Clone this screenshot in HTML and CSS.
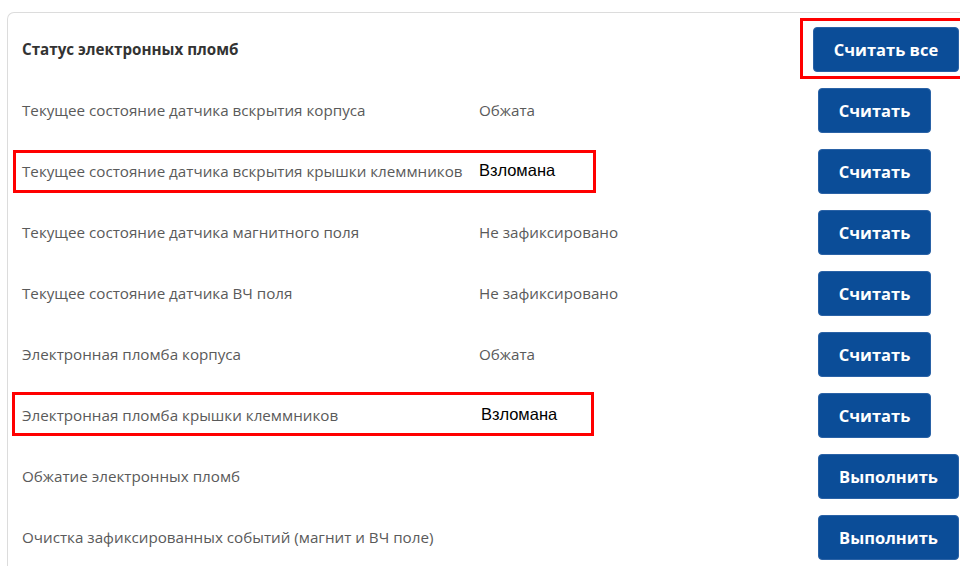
FILE: index.html
```html
<!DOCTYPE html>
<html lang="ru">
<head>
<meta charset="utf-8">
<title>Статус электронных пломб</title>
<link rel="stylesheet" href="styles.css">
</head>
<body>
<section class="card">
  <div class="row head">
    <div class="label title">Статус электронных пломб</div>
    <div class="value"></div>
    <div class="action"><button class="btn wide">Считать все</button></div>
  </div>
  <div class="row">
    <div class="label">Текущее состояние датчика вскрытия корпуса</div>
    <div class="value">Обжата</div>
    <div class="action"><button class="btn">Считать</button></div>
  </div>
  <div class="row">
    <div class="label">Текущее состояние датчика вскрытия крышки клеммников</div>
    <div class="value"><span class="alert">Взломана</span></div>
    <div class="action"><button class="btn">Считать</button></div>
  </div>
  <div class="row">
    <div class="label">Текущее состояние датчика магнитного поля</div>
    <div class="value">Не зафиксировано</div>
    <div class="action"><button class="btn">Считать</button></div>
  </div>
  <div class="row">
    <div class="label">Текущее состояние датчика ВЧ поля</div>
    <div class="value">Не зафиксировано</div>
    <div class="action"><button class="btn">Считать</button></div>
  </div>
  <div class="row">
    <div class="label">Электронная пломба корпуса</div>
    <div class="value">Обжата</div>
    <div class="action"><button class="btn">Считать</button></div>
  </div>
  <div class="row">
    <div class="label">Электронная пломба крышки клеммников</div>
    <div class="value"><span class="alert shift">Взломана</span></div>
    <div class="action"><button class="btn">Считать</button></div>
  </div>
  <div class="row">
    <div class="label">Обжатие электронных пломб</div>
    <div class="value"></div>
    <div class="action"><button class="btn long">Выполнить</button></div>
  </div>
  <div class="row">
    <div class="label">Очистка зафиксированных событий (магнит и ВЧ поле)</div>
    <div class="value"></div>
    <div class="action"><button class="btn long">Выполнить</button></div>
  </div>

  <!-- highlight frames drawn over the card -->
  <div class="mark mark-all"></div>
  <div class="mark mark-cover"></div>
  <div class="mark mark-seal"></div>
</section>
</body>
</html>
```

FILE: styles.css
```css
html, body {
  margin: 0;
  padding: 0;
  background: #fff;
  overflow: hidden;
}

body {
  width: 960px;
  height: 566px;
  font-family: "Open Sans", "Noto Sans", sans-serif;
}

.card {
  position: relative;
  margin: 12px 0 0 7px;
  width: 953px;
  height: 554px;
  border: 1px solid #dcdcdc;
  border-right: none;
  border-bottom: none;
  border-top-left-radius: 7px;
  padding: 6px 0 0 14px;
  box-sizing: border-box;
  overflow: hidden;
}

.row {
  display: grid;
  grid-template-columns: 457px 339px 1fr;
  align-items: center;
  height: 61px;
}

.label {
  font-size: 15.2px;
  color: #5a5a5a;
  white-space: nowrap;
  padding-bottom: 1px;
}

.title {
  font-weight: 700;
  color: #333;
}

.value {
  font-size: 15.2px;
  color: #5a5a5a;
  white-space: nowrap;
  padding-bottom: 1px;
}

.alert {
  font-family: "Liberation Sans", Arial, sans-serif;
  font-size: 16.5px;
  color: #000;
  position: relative;
  top: -1px;
}

.alert.shift { left: 2px; }

.action {
  display: flex;
}

.btn {
  flex-shrink: 0;
  height: 45px;
  width: 113px;
  border: 1px solid #2a62a6;
  border-radius: 4px;
  background: #0b4d98;
  color: #fff;
  font-family: "Open Sans", "Noto Sans", sans-serif;
  font-weight: 700;
  font-size: 16.5px;
  padding: 0;
}

.btn.wide {
  width: 146px;
  margin-left: -5px;
}

.btn.long {
  width: 141px;
}

.mark {
  position: absolute;
  border: 3px solid #f00;
  box-sizing: border-box;
  pointer-events: none;
}

.mark-all {
  left: 792px;
  top: 5px;
  width: 161px;
  height: 61px;
  border-right: none;
}

.mark-cover {
  left: 5px;
  top: 137px;
  width: 583px;
  height: 43px;
}

.mark-seal {
  left: 4px;
  top: 379px;
  width: 582px;
  height: 44px;
}
```
